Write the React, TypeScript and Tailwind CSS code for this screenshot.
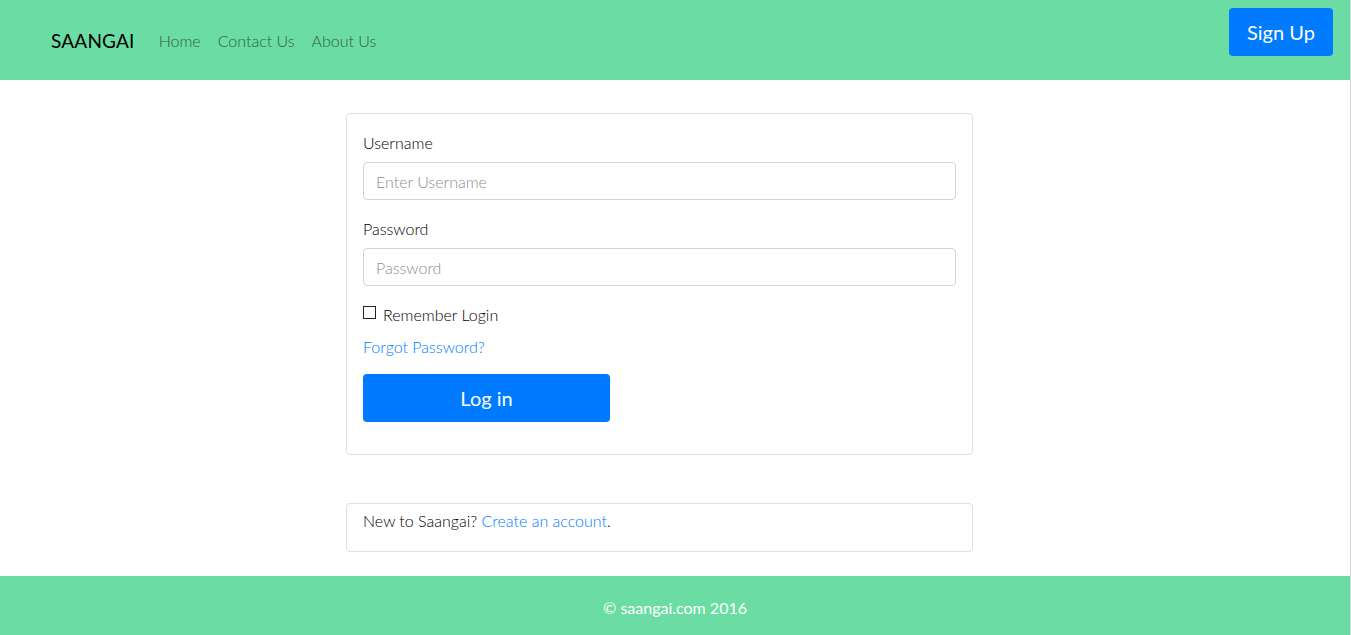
import React from "react";

export default function App() {
  const font = { fontFamily: "Lato, 'Open Sans', sans-serif" };
  return (
    <div className="w-[1351px] h-[635px] overflow-hidden bg-white border-r border-[#d6d6d6]" style={font}>
      <header className="h-[80px] bg-[#6bdca3] flex items-center pl-[51px] pr-[17px]">
        <span className="text-[19px] text-black tracking-[0.2px] mt-[2px]">SAANGAI</span>
        <nav className="flex items-center gap-[17px] ml-[24px] mt-[2px] text-[16px] font-light text-[#2f5f47]">
          <a>Home</a>
          <a>Contact Us</a>
          <a>About Us</a>
        </nav>
        <div className="flex-1" />
        <button className="w-[104px] h-[48px] rounded-[4px] bg-[#007bff] text-white text-[20px] self-start mt-[8px]">Sign Up</button>
      </header>

      <main className="pt-[33px] pb-[24px]">
        <div className="ml-[346px] w-[627px] border border-[#dfdfdf] rounded-[4px] p-[16px] text-[16px] text-black font-light">
          <label className="block leading-[24px] pt-[1px] h-[24px]">Username</label>
          <input
            className="block w-full h-[38px] mt-[8px] border border-[#ced4da] rounded-[4px] px-[12px] text-[16px] placeholder:text-[#8a8f94] font-light outline-none"
            placeholder="Enter Username"
            style={font}
          />
          <label className="block leading-[24px] pt-[1px] h-[24px] mt-[16px]">Password</label>
          <input
            className="block w-full h-[38px] mt-[8px] border border-[#ced4da] rounded-[4px] px-[12px] text-[16px] placeholder:text-[#8a8f94] font-light outline-none"
            placeholder="Password"
            style={font}
          />
          <div className="mt-[16px] h-[24px] flex items-center">
            <span className="w-[13px] h-[13px] border border-[#222] mr-[7px] -mt-[3px]" />
            <span className="mt-[2px]">Remember Login</span>
          </div>
          <div className="mt-[9px] leading-[24px] text-[#007bff]">Forgot Password?</div>
          <button className="mt-[15px] mb-[16px] w-[247px] h-[48px] rounded-[4px] bg-[#007bff] text-white text-[20px] font-normal" style={font}>Log in</button>
        </div>

        <div className="ml-[346px] mt-[48px] w-[627px] h-[49px] border border-[#dfdfdf] rounded-[4px] px-[16px] pt-[5px] text-[16px] leading-[24px] text-black font-light">
          New to Saangai? <span className="text-[#007bff]">Create an account</span>.
        </div>
      </main>

      <footer className="h-[59px] bg-[#6bdca3] flex items-center justify-center text-white text-[16px] pt-[4px]">
        © saangai.com 2016
      </footer>
    </div>
  );
}
